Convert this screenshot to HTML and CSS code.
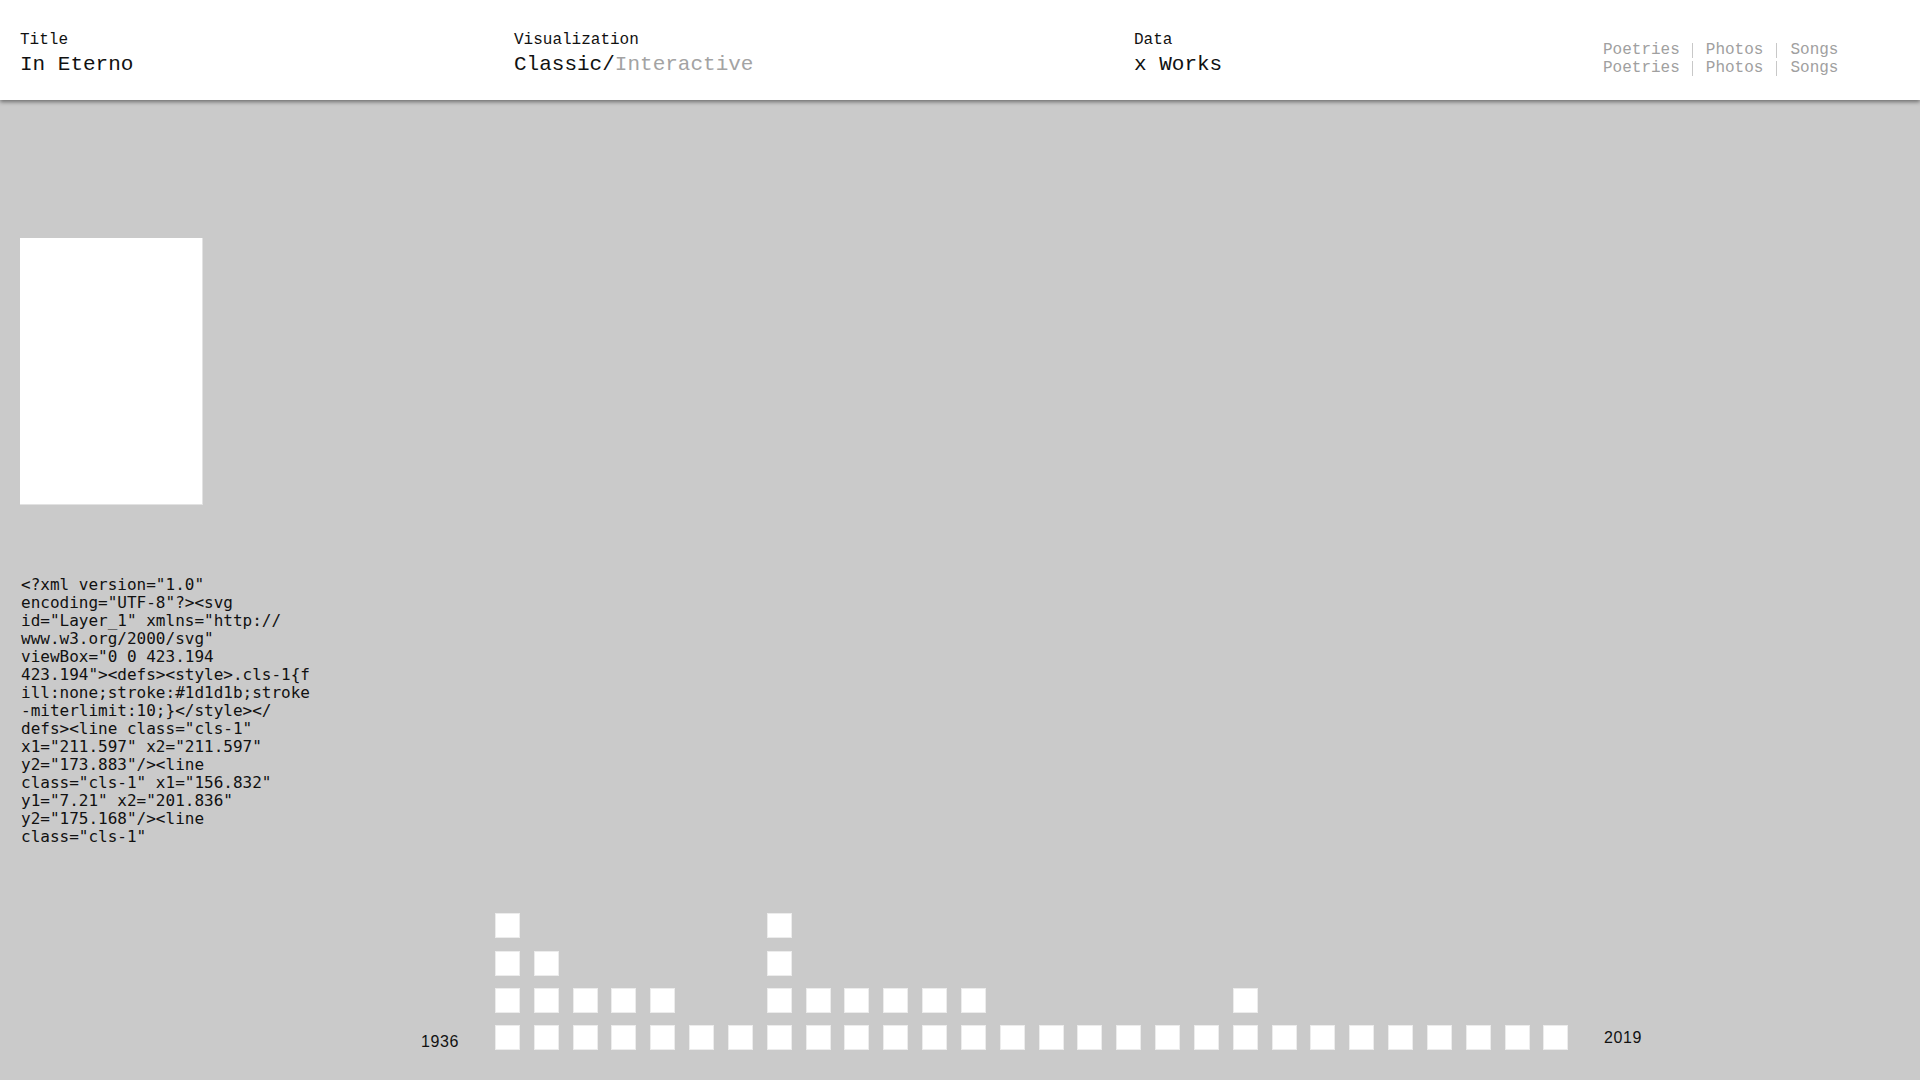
FILE: index.html
```
<!DOCTYPE html>
<html lang="en">
<head>
<meta charset="utf-8">
<title>In Eterno</title>
<link rel="stylesheet" href="styles.css">
</head>
<body>
<header class="topbar">
  <div class="field field-title">
    <div class="field-label">Title</div>
    <div class="field-value">In Eterno</div>
  </div>
  <div class="field field-vis">
    <div class="field-label">Visualization</div>
    <div class="field-value">Classic/<span class="muted">Interactive</span></div>
  </div>
  <div class="field field-data">
    <div class="field-label">Data</div>
    <div class="field-value">x Works</div>
  </div>
  <nav class="filters">
    <div class="filter-row">
      <span class="filter">Poetries</span><span class="filter">Photos</span><span class="filter">Songs</span>
    </div>
    <div class="filter-row">
      <span class="filter">Poetries</span><span class="filter">Photos</span><span class="filter">Songs</span>
    </div>
  </nav>
</header>
<main class="stage">
  <aside class="sidebar">
    <div class="poster"></div>
    <pre class="code">&lt;?xml version="1.0"
encoding="UTF-8"?&gt;&lt;svg
id="Layer_1" xmlns="http://
www.w3.org/2000/svg"
viewBox="0 0 423.194
423.194"&gt;&lt;defs&gt;&lt;style&gt;.cls-1{f
ill:none;stroke:#1d1d1b;stroke
-miterlimit:10;}&lt;/style&gt;&lt;/
defs&gt;&lt;line class="cls-1"
x1="211.597" x2="211.597"
y2="173.883"/&gt;&lt;line
class="cls-1" x1="156.832"
y1="7.21" x2="201.836"
y2="175.168"/&gt;&lt;line
class="cls-1"</pre>
  </aside>
  <section class="timeline">
    <span class="year year-start">1936</span>
    <div class="cols">
      <div class="col"><i class="sq"></i><i class="sq"></i><i class="sq"></i><i class="sq"></i></div>
      <div class="col"><i class="sq"></i><i class="sq"></i><i class="sq"></i></div>
      <div class="col"><i class="sq"></i><i class="sq"></i></div>
      <div class="col"><i class="sq"></i><i class="sq"></i></div>
      <div class="col"><i class="sq"></i><i class="sq"></i></div>
      <div class="col"><i class="sq"></i></div>
      <div class="col"><i class="sq"></i></div>
      <div class="col"><i class="sq"></i><i class="sq"></i><i class="sq"></i><i class="sq"></i></div>
      <div class="col"><i class="sq"></i><i class="sq"></i></div>
      <div class="col"><i class="sq"></i><i class="sq"></i></div>
      <div class="col"><i class="sq"></i><i class="sq"></i></div>
      <div class="col"><i class="sq"></i><i class="sq"></i></div>
      <div class="col"><i class="sq"></i><i class="sq"></i></div>
      <div class="col"><i class="sq"></i></div>
      <div class="col"><i class="sq"></i></div>
      <div class="col"><i class="sq"></i></div>
      <div class="col"><i class="sq"></i></div>
      <div class="col"><i class="sq"></i></div>
      <div class="col"><i class="sq"></i></div>
      <div class="col"><i class="sq"></i><i class="sq"></i></div>
      <div class="col"><i class="sq"></i></div>
      <div class="col"><i class="sq"></i></div>
      <div class="col"><i class="sq"></i></div>
      <div class="col"><i class="sq"></i></div>
      <div class="col"><i class="sq"></i></div>
      <div class="col"><i class="sq"></i></div>
      <div class="col"><i class="sq"></i></div>
      <div class="col"><i class="sq"></i></div>
    </div>
    <span class="year year-end">2019</span>
  </section>
</main>
</body>
</html>
```
FILE: styles.css
```
* { box-sizing: border-box; }

html, body {
  margin: 0;
  padding: 0;
}

body {
  background: #cacaca;
  height: 100vh;
  display: flex;
  flex-direction: column;
  overflow: hidden;
  color: #111;
}

.topbar {
  position: relative;
  z-index: 2;
  flex: 0 0 100px;
  height: 100px;
  background: #fff;
  box-shadow: 0 2px 4px rgba(0, 0, 0, 0.45);
  display: flex;
  align-items: flex-start;
  padding: 30px 0 0 20px;
  font-family: "Liberation Mono", "Courier New", monospace;
}

.field-title { width: 494px; }
.field-vis { width: 620px; }
.field-data { width: 469px; }

.field-label {
  font-size: 16px;
  line-height: 20px;
  color: #111;
}

.field-value {
  margin-top: 2px;
  font-size: 21px;
  line-height: 26px;
  color: #111;
}

.muted { color: #a3a3a3; }

.filters {
  margin-top: 13px;
  display: flex;
  flex-direction: column;
  gap: 3.4px;
}

.filter-row {
  display: flex;
}

.filter {
  font-size: 16px;
  line-height: 15px;
  height: 15px;
  color: #a0a0a0;
  padding: 0 13px;
  border-left: 1px solid #c8c8c8;
}

.filter:first-child {
  padding-left: 0;
  padding-right: 12px;
  border-left: none;
}

.stage {
  flex: 1;
  display: flex;
  flex-direction: column;
}

.sidebar {
  padding: 138px 0 0 21px;
}

.poster {
  margin-left: -1px;
  width: 183px;
  height: 267px;
  background: #fff;
  border-right: 1px solid #e2e2e2;
  border-bottom: 1px solid #e2e2e2;
}

.code {
  margin: 71px 0 0 0;
  font-family: "DejaVu Sans Mono", "Liberation Mono", monospace;
  font-size: 16px;
  line-height: 18px;
  color: #111;
  white-space: pre;
}

.timeline {
  margin-top: auto;
  display: flex;
  align-items: flex-end;
  padding: 0 0 30px 421px;
}

.year {
  font-family: "Liberation Sans", Arial, sans-serif;
  font-size: 16px;
  line-height: 18px;
  letter-spacing: 0.6px;
  color: #111;
}

.year-start {
  margin-right: 36px;
  margin-bottom: -1.4px;
}

.year-end {
  margin-left: 35.7px;
  margin-bottom: 3.3px;
}

.cols {
  display: flex;
  align-items: flex-end;
  gap: 13.83px;
}

.col {
  display: flex;
  flex-direction: column-reverse;
  gap: 12.2px;
}

.sq {
  display: block;
  width: 25px;
  height: 25px;
  background: #fff;
  border: 1px solid #ececec;
}
```
